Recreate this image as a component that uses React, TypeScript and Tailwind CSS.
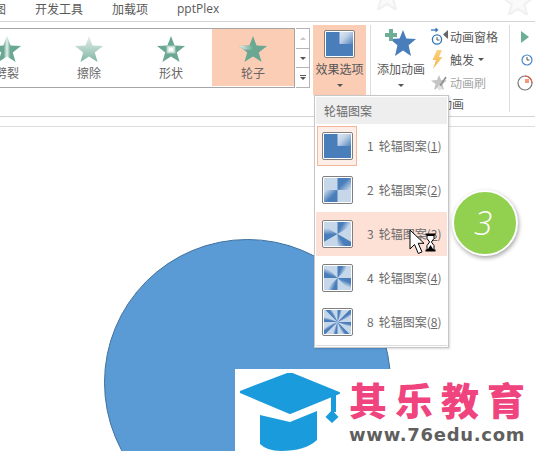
import React from 'react';

const STAR = '14,0 17.6,9.6 28,10 19.8,16.4 22.6,26 14,20.4 5.4,26 8.2,16.4 0,10 10.4,9.6';

const GalleryStar = ({ kind }: { kind: 'split' | 'wipe' | 'shape' | 'wheel' }) => (
  <svg width="28" height="26" viewBox="0 0 28 26">
    <defs>
      <linearGradient id="g-split" x1="0" y1="0" x2="1" y2="0">
        <stop offset="0.38" stopColor="#6aa893" />
        <stop offset="0.5" stopColor="#e4f0ec" />
        <stop offset="0.62" stopColor="#6aa893" />
      </linearGradient>
      <linearGradient id="g-wipe" x1="0" y1="0" x2="0" y2="1">
        <stop offset="0" stopColor="#e6f0ed" />
        <stop offset="1" stopColor="#7fb5a3" />
      </linearGradient>
      <linearGradient id="g-wheel" x1="0" y1="0" x2="1" y2="0">
        <stop offset="0" stopColor="#e8f1ee" />
        <stop offset="1" stopColor="#6aa893" />
      </linearGradient>
    </defs>
    {kind === 'split' && <polygon points={STAR} fill="url(#g-split)" />}
    {kind === 'wipe' && <polygon points={STAR} fill="url(#g-wipe)" />}
    {kind === 'shape' && (
      <>
        <polygon points={STAR} fill="#6aa893" />
        <rect x="10" y="10" width="8" height="7" fill="#dfece7" stroke="#a9cdc0" />
        <rect x="12" y="12" width="4" height="3" fill="#fff" />
      </>
    )}
    {kind === 'wheel' && (
      <>
        <polygon points={STAR} fill="#6aa893" />
        <polygon points="14,14 14,9.6 10.4,9.6 0,10 5,13.6" fill="url(#g-wheel)" />
      </>
    )}
  </svg>
);

const GalleryCell = ({ kind, label, active }: { kind: 'split' | 'wipe' | 'shape' | 'wheel'; label: string; active?: boolean }) => (
  <div className={`w-[82px] h-[57px] shrink-0 flex flex-col items-center pt-[7px] ${active ? 'bg-[#fbcdb5]' : ''}`}>
    <GalleryStar kind={kind} />
    <span className="text-[12px] leading-[16px] mt-[3px] text-[#666]">{label}</span>
  </div>
);

const Caret = () => <div className="w-0 h-0 border-x-[3px] border-x-transparent border-t-[3px] border-t-[#555]" />;

// faint star from the picture behind the tab row
const GhostStar = ({ className }: { className: string }) => (
  <svg className={`absolute ${className}`} width="30" height="28" viewBox="0 0 28 26">
    <polygon points={STAR} fill="#fafafa" stroke="#f1f1f1" strokeWidth="2" strokeLinejoin="round" />
  </svg>
);

// spoke thumbnails of the effect menu
const WheelThumb = ({ n, start, span, inverse }: { n: number; start: number; span: number; inverse?: boolean }) => {
  const cx = 14;
  const cy = 12.5;
  const pt = (deg: number, r: number) => {
    const a = ((deg - 90) * Math.PI) / 180;
    return [cx + r * Math.cos(a), cy + r * Math.sin(a)];
  };
  const wedges = Array.from({ length: n }, (_, i) => {
    const a = start + (i * 360) / n;
    return { a, p1: pt(a, 30), p2: pt(a + span, 30), g1: pt(a, 12), g2: pt(a + span, 12) };
  });
  return (
    <div className="w-[31px] h-[28px] rounded-[2px] border border-[#7f7f7f] bg-white p-px shrink-0">
      <svg width="27" height="24" viewBox="0 0 28 25" className="block" preserveAspectRatio="none">
        <defs>
          {wedges.map((w, i) => (
            <linearGradient key={i} id={`w${n}-${i}`} gradientUnits="userSpaceOnUse" x1={w.g1[0]} y1={w.g1[1]} x2={w.g2[0]} y2={w.g2[1]}>
              <stop offset="0.1" stopColor={inverse ? '#d6e2f0' : '#4a7ebb'} />
              <stop offset="0.45" stopColor={inverse ? '#c0d2e7' : '#4a7ebb'} />
              <stop offset="1" stopColor={inverse ? '#5f8dc3' : '#c6d7ea'} />
            </linearGradient>
          ))}
        </defs>
        <rect width="28" height="25" fill={inverse ? '#4a7ebb' : '#c6d7ea'} />
        {wedges.map((w, i) => (
          <polygon key={i} points={`${cx},${cy} ${w.p1[0]},${w.p1[1]} ${w.p2[0]},${w.p2[1]}`} fill={`url(#w${n}-${i})`} />
        ))}
      </svg>
    </div>
  );
};

const MenuItem = ({ thumb, num, hover, selected }: { thumb: React.ReactNode; num: number; hover?: boolean; selected?: boolean }) => (
  <div className={`h-[44px] flex items-center pl-[1px] ${hover ? 'bg-[#fde1d7]' : ''}`}>
    <div className={`w-[40px] h-[40px] shrink-0 flex items-center justify-center ${selected ? 'border border-[#f5b59a] bg-[#fdeee8]' : ''}`}>
      {thumb}
    </div>
    <span className="ml-[10px] text-[12px] text-[#6b6b6b] whitespace-nowrap">
      {num}
      <span className="ml-[5px]">轮辐图案(<span className="underline">{num}</span>)</span>
    </span>
  </div>
);

const SideRow = ({ icon, children, muted }: { icon: React.ReactNode; children: React.ReactNode; muted?: boolean }) => (
  <div className={`h-[23px] flex items-center text-[12px] whitespace-nowrap ${muted ? 'text-[#a6a6a6]' : 'text-[#595959]'}`}>
    <div className="w-[19px] h-[23px] flex items-center shrink-0">{icon}</div>
    {children}
  </div>
);

export default function App() {
  return (
    <div className="relative w-[535px] h-[451px] overflow-hidden bg-white font-['Noto_Sans_CJK_SC','Noto_Sans',sans-serif]">
      <GhostStar className="left-[372px] top-[-18px]" />
      <GhostStar className="left-[503px] top-[-13px]" />

      {/* tabs */}
      <div className="relative h-[22px] border-b border-[#d4d4d4] flex items-start text-[12px] leading-[17px] text-[#595959] whitespace-nowrap">
        <span className="ml-[-6px] w-[41px]">图</span>
        <span className="w-[77px]">开发工具</span>
        <span className="w-[65px]">加载项</span>
        <span className="font-['Open_Sans',sans-serif] text-[12px]">pptPlex</span>
      </div>

      {/* ribbon */}
      <div className="h-[95px] border-b border-[#d4d4d4] flex items-start">
        <div className="mt-[6px] ml-[-35px] h-[60px] flex shrink-0 border border-[#a6a6a6] bg-white">
          <GalleryCell kind="split" label="劈裂" />
          <GalleryCell kind="wipe" label="擦除" />
          <GalleryCell kind="shape" label="形状" />
          <GalleryCell kind="wheel" label="轮子" active />
        </div>
        <div className="mt-[6px] ml-px w-[14px] h-[60px] shrink-0 flex flex-col border border-l-0 border-[#b5b5b5]">
          <div className="h-[20px] flex items-center justify-center border-b border-[#b5b5b5]">
            <div className="w-0 h-0 border-x-[3px] border-x-transparent border-b-[3px] border-b-[#c8c8c8]" />
          </div>
          <div className="h-[19px] flex items-center justify-center border-b border-[#b5b5b5]">
            <Caret />
          </div>
          <div className="h-[19px] flex flex-col items-center justify-center gap-px">
            <div className="w-[6px] h-px bg-[#555]" />
            <Caret />
          </div>
        </div>

        {/* effect options */}
        <div className="ml-[3px] mt-[3px] w-[53px] h-[70px] bg-[#fbcdb5] shrink-0 flex flex-col items-center pt-[5px]">
          <WheelThumb n={1} start={0} span={90} inverse />
          <span className="text-[12px] leading-[16px] mt-[3px] text-[#555] whitespace-nowrap">效果选项</span>
          <div className="mt-[7px]"><Caret /></div>
        </div>

        <div className="ml-[4px] mt-[3px] w-px h-[87px] bg-[#dcdcdc] shrink-0" />

        {/* advanced animation */}
        <div className="w-[138px] shrink-0 mt-[3px] h-[87px] flex flex-col">
          <div className="flex h-[73px]">
            <div className="ml-[6px] w-[48px] flex flex-col items-center pt-[4px]">
              <svg width="32" height="28" viewBox="0 0 32 28" className="block">
                <polygon points="18,1 21.4,9.5 31,10 23.6,16.2 26,27 18,21.4 10,27 12.4,16.2 5,10 14.6,9.5" fill="#4a7ebb" />
                <path d="M4 0h4v4h4v4H8v4H4V8H0V4h4z" fill="#6fae96" />
              </svg>
              <span className="text-[12px] leading-[16px] mt-[4px] text-[#595959] whitespace-nowrap">添加动画</span>
              <div className="mt-[7px]"><Caret /></div>
            </div>
            <div className="ml-[6px] flex flex-col">
              <SideRow
                icon={
                  <svg width="18" height="20" viewBox="0 0 18 20">
                    <path d="M0 3h6" stroke="#2e75b6" strokeWidth="1.3" />
                    <path d="M4.5 0.5L7.5 3L4.5 5.5z" fill="#2e75b6" />
                    <circle cx="6" cy="12.5" r="4.6" fill="#fff" stroke="#2e75b6" strokeWidth="1.3" />
                    <path d="M6 10v3h2.4" stroke="#555" fill="none" />
                    <path d="M17 3v9l-5-4.5z" fill="#666" />
                  </svg>
                }
              >
                动画窗格
              </SideRow>
              <SideRow
                icon={
                  <svg width="12" height="19" viewBox="0 0 12 19">
                    <defs>
                      <linearGradient id="bolt" x1="0" y1="0" x2="0" y2="1">
                        <stop offset="0" stopColor="#fbd27c" />
                        <stop offset="1" stopColor="#f3b54a" />
                      </linearGradient>
                    </defs>
                    <path d="M6 0h5L8 7h3.5L2 19l3-9H1.5z" fill="url(#bolt)" />
                  </svg>
                }
              >
                触发
                <span className="ml-[4px]"><Caret /></span>
              </SideRow>
              <SideRow
                muted
                icon={
                  <svg width="18" height="18" viewBox="0 0 18 18">
                    <polygon points="8,1 10,6 16,6.5 11.5,10 13,16 8,13 3,16 4.5,10 0,6.5 6,6" fill="#c4c4c4" />
                    <path d="M15 3L9 12" stroke="#8f8f8f" strokeWidth="1.6" />
                    <path d="M8 11l3 2-2 4-3-3z" fill="#e2e2e2" />
                  </svg>
                }
              >
                动画刷
              </SideRow>
            </div>
          </div>
          <div className="text-center text-[12px] leading-[16px] text-[#595959]">高级动画</div>
        </div>

        <div className="mt-[3px] w-px h-[87px] bg-[#dcdcdc] shrink-0" />

        {/* timing icons */}
        <div className="ml-[11px] mt-[3px] flex flex-col shrink-0">
          <div className="h-[23px] flex items-center">
            <div className="w-0 h-0 border-y-[6px] border-y-transparent border-l-[8px] border-l-[#6fae96]" />
          </div>
          <div className="h-[23px] flex items-center">
            <svg width="12" height="12" viewBox="0 0 12 12">
              <circle cx="6" cy="6" r="5" fill="#fff" stroke="#4a86c5" strokeWidth="1.2" />
              <path d="M6 3v3h2.5" stroke="#555" fill="none" />
            </svg>
          </div>
          <div className="h-[23px] flex items-center -ml-[4px]">
            <svg width="16" height="16" viewBox="0 0 16 16">
              <circle cx="8" cy="8" r="7" fill="#fff" stroke="#777" strokeWidth="1.2" />
              <path d="M8 1a7 7 0 0 1 7 7" stroke="#e0583c" fill="none" strokeWidth="1.2" />
              <path d="M8 4h4v4H8z" fill="#ef9c80" />
            </svg>
          </div>
        </div>
      </div>

      <div className="h-[10px] border-b border-[#dcdcdc]" />

      {/* slide canvas */}
      <div className="absolute left-[104px] top-[239px] w-[287px] h-[287px] rounded-full bg-[#5b9bd5] border border-[#41719c]" />

      {/* dropdown */}
      <div className="absolute left-[314px] top-[95px] w-[135px] h-[253px] bg-white border border-[#c6c6c6] shadow-[1px_1px_2px_rgba(0,0,0,0.15)] p-px">
        <div className="h-[27px] bg-[#eeeeee] pl-[8px] text-[12px] leading-[27px] text-[#6b6b6b]">轮辐图案</div>
        <MenuItem num={1} selected thumb={<WheelThumb n={1} start={0} span={90} inverse />} />
        <MenuItem num={2} thumb={<WheelThumb n={2} start={0} span={90} />} />
        <MenuItem num={3} hover thumb={<WheelThumb n={3} start={0} span={60} />} />
        <MenuItem num={4} thumb={<WheelThumb n={4} start={0} span={45} />} />
        <MenuItem num={8} thumb={<WheelThumb n={8} start={0} span={22.5} />} />
        <div className="h-px bg-[#dcdcdc] mt-px" />
      </div>

      {/* pointer + busy glass */}
      <svg className="absolute left-[409px] top-[229px]" width="28" height="27" viewBox="0 0 28 27">
        <path d="M1 1v19l4.5-4.5 3.8 9 3.7-1.6-3.8-8.6H15z" fill="#fff" stroke="#000" strokeWidth="1" />
        <path d="M16.5 5.5h10M16.5 21.5h10" stroke="#000" strokeWidth="2" />
        <path d="M18 6.5h7v3l-2.6 3.5 2.6 3.5v4h-7v-4l2.6-3.5-2.6-3.5z" fill="#fff" stroke="#000" />
        <path d="M19 20h5l-2.5-4z" fill="#000" />
      </svg>

      {/* step badge */}
      <div className="absolute left-[452px] top-[190px] w-[66px] h-[66px] rounded-full bg-[#92d050] border-2 border-white shadow-[1px_2px_4px_rgba(0,0,0,0.35)] flex items-center justify-center pr-[4px] text-white text-[33px] italic font-light font-['Open_Sans',sans-serif]">
        3
      </div>

      {/* watermark */}
      <div className="absolute left-[235px] top-[369px] w-[300px] h-[82px] bg-white flex items-start">
        <svg className="ml-[5px] mt-[4px] shrink-0" width="102" height="78" viewBox="0 0 102 78">
          <path d="M50 0L99 20L50 40L0 19z" fill="#1a9bdc" stroke="#1a9bdc" strokeWidth="2" strokeLinejoin="round" />
          <path d="M20 42l30 7 27-11v29q-12 11-36 11q-14 0-21-7z" fill="#1a9bdc" />
          <path d="M91 22h5v17h-5z" fill="#1a9bdc" />
          <path d="M92 37l6.500 7-6.500 6-6.500-6z" fill="#1a9bdc" />
        </svg>
        <div className="ml-[7px] flex flex-col whitespace-nowrap">
          <span className="text-[38px] leading-[44px] font-black tracking-[8px] text-[#f0447e] mt-[8px]">其乐教育</span>
          <span className="text-[18px] leading-[20px] font-bold tracking-[0.7px] text-[#5f5f5f] font-['DejaVu_Sans',sans-serif] mt-[4px]">www.76edu.com</span>
        </div>
      </div>
    </div>
  );
}
